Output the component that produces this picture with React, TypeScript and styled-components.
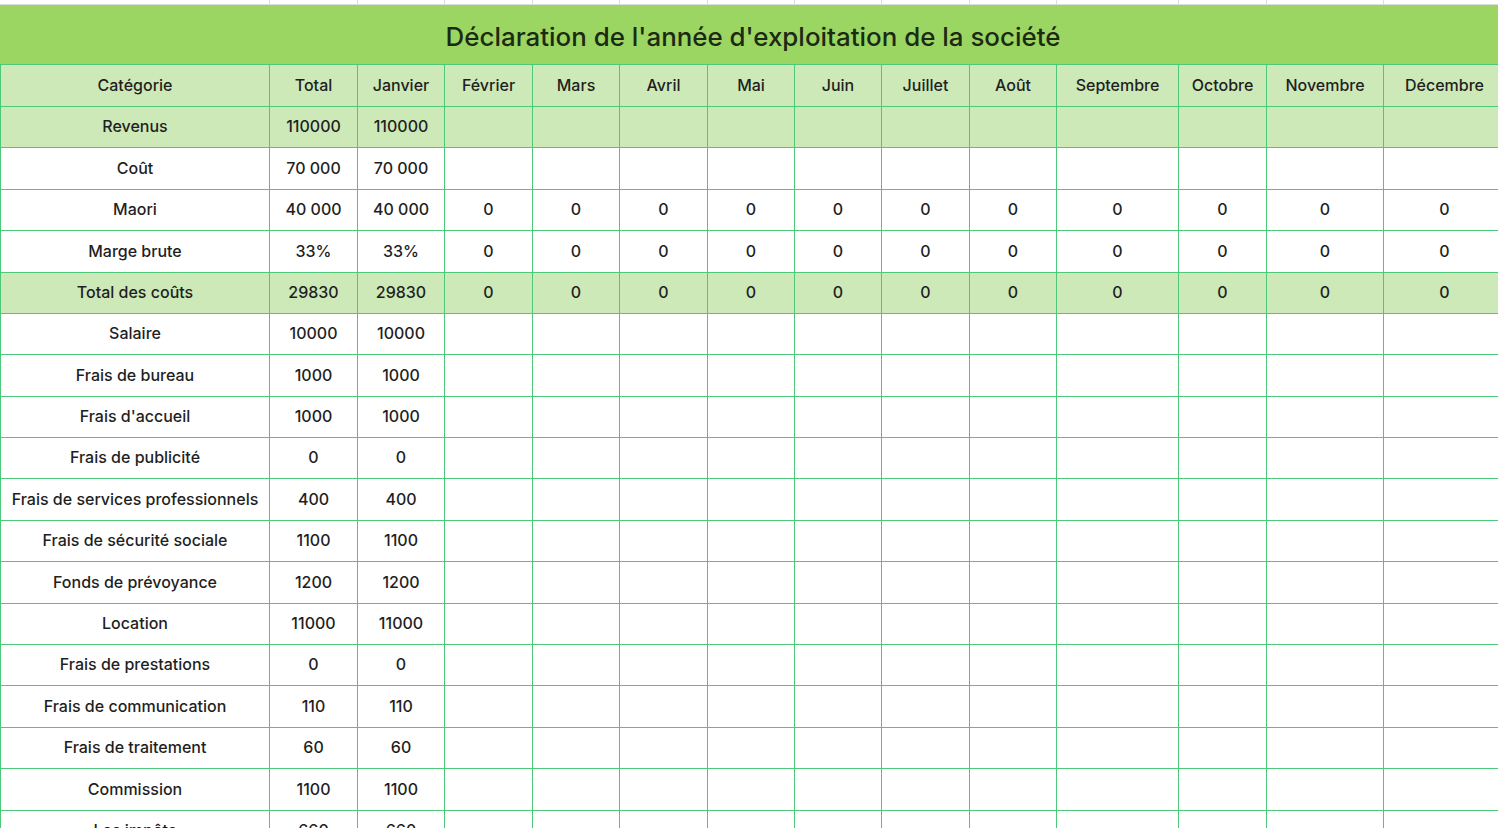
import React from "react";
import styled, { createGlobalStyle } from "styled-components";

const GlobalStyle = createGlobalStyle`
  html, body { margin: 0; padding: 0; background: #ffffff; overflow: hidden; }
  body { font-family: Inter, "Noto Sans", "Liberation Sans", sans-serif; color: #1f1f1f; }
`;

const COLS = [270, 88, 87, 88, 87, 88, 87, 87, 88, 87, 122, 88, 117, 122];
const TEMPLATE = COLS.map((w) => `${w}px`).join(" ");
const BORDER = "#4cc878";

const Sheet = styled.div`
  width: ${COLS.reduce((a, b) => a + b, 0)}px;
  display: flex;
  flex-direction: column;
`;

const TopStrip = styled.div`
  display: grid;
  grid-template-columns: ${TEMPLATE};
  height: 5px;
`;

const StripCell = styled.div`
  border-right: 1px solid #dcdcdc;
  border-bottom: 1px solid #dcdcdc;
  box-sizing: border-box;
`;

const Title = styled.div`
  height: 60px;
  box-sizing: border-box;
  background: #9cd662;
  border-bottom: 1px solid ${BORDER};
  display: flex;
  align-items: center;
  justify-content: center;
  font-size: 25.9px;
  font-weight: 500;
  color: #1c2a14;
  padding-top: 4px;
`;

const Row = styled.div<{ $tint?: boolean; $h: number }>`
  display: grid;
  grid-template-columns: ${TEMPLATE};
  height: ${(p) => p.$h}px;
  background: ${(p) => (p.$tint ? "#cee9b8" : "#ffffff")};
`;

const Cell = styled.div`
  box-sizing: border-box;
  border-right: 1px solid ${BORDER};
  border-bottom: 1px solid ${BORDER};
  display: flex;
  align-items: center;
  justify-content: center;
  font-size: 16px;
  font-weight: 500;
  white-space: nowrap;
  overflow: hidden;
  padding-bottom: 2px;
  &:first-child { border-left: 1px solid ${BORDER}; }
`;

const months = [
  "Février", "Mars", "Avril", "Mai", "Juin", "Juillet", "Août",
  "Septembre", "Octobre", "Novembre", "Décembre",
];

const zeros = Array(11).fill("0");
const blanks = Array(11).fill("");

type R = { label: string; total: string; jan: string; rest: string[]; tint?: boolean };

const rows: R[] = [
  { label: "Revenus", total: "110000", jan: "110000", rest: blanks, tint: true },
  { label: "Coût", total: "70 000", jan: "70 000", rest: blanks },
  { label: "Maori", total: "40 000", jan: "40 000", rest: zeros },
  { label: "Marge brute", total: "33%", jan: "33%", rest: zeros },
  { label: "Total des coûts", total: "29830", jan: "29830", rest: zeros, tint: true },
  { label: "Salaire", total: "10000", jan: "10000", rest: blanks },
  { label: "Frais de bureau", total: "1000", jan: "1000", rest: blanks },
  { label: "Frais d'accueil", total: "1000", jan: "1000", rest: blanks },
  { label: "Frais de publicité", total: "0", jan: "0", rest: blanks },
  { label: "Frais de services professionnels", total: "400", jan: "400", rest: blanks },
  { label: "Frais de sécurité sociale", total: "1100", jan: "1100", rest: blanks },
  { label: "Fonds de prévoyance", total: "1200", jan: "1200", rest: blanks },
  { label: "Location", total: "11000", jan: "11000", rest: blanks },
  { label: "Frais de prestations", total: "0", jan: "0", rest: blanks },
  { label: "Frais de communication", total: "110", jan: "110", rest: blanks },
  { label: "Frais de traitement", total: "60", jan: "60", rest: blanks },
  { label: "Commission", total: "1100", jan: "1100", rest: blanks },
  { label: "Les impôts", total: "660", jan: "660", rest: blanks },
];

// row bottoms measured from reference
const bottoms = [106, 147, 189, 230, 272, 313, 354, 396, 437, 478, 520, 561, 603, 644, 685, 727, 768, 810, 851];

export default function App() {
  return (
    <>
      <GlobalStyle />
      <Sheet>
        <TopStrip>
          {COLS.map((_, i) => (
            <StripCell key={i} />
          ))}
        </TopStrip>
        <Title>Déclaration de l'année d'exploitation de la société</Title>
        <Row $tint $h={bottoms[0] - 64}>
          <Cell>Catégorie</Cell>
          <Cell>Total</Cell>
          <Cell>Janvier</Cell>
          {months.map((m) => (
            <Cell key={m}>{m}</Cell>
          ))}
        </Row>
        {rows.map((r, i) => (
          <Row key={r.label} $tint={r.tint} $h={bottoms[i + 1] - bottoms[i]}>
            <Cell>{r.label}</Cell>
            <Cell>{r.total}</Cell>
            <Cell>{r.jan}</Cell>
            {r.rest.map((v, j) => (
              <Cell key={j}>{v}</Cell>
            ))}
          </Row>
        ))}
      </Sheet>
    </>
  );
}
